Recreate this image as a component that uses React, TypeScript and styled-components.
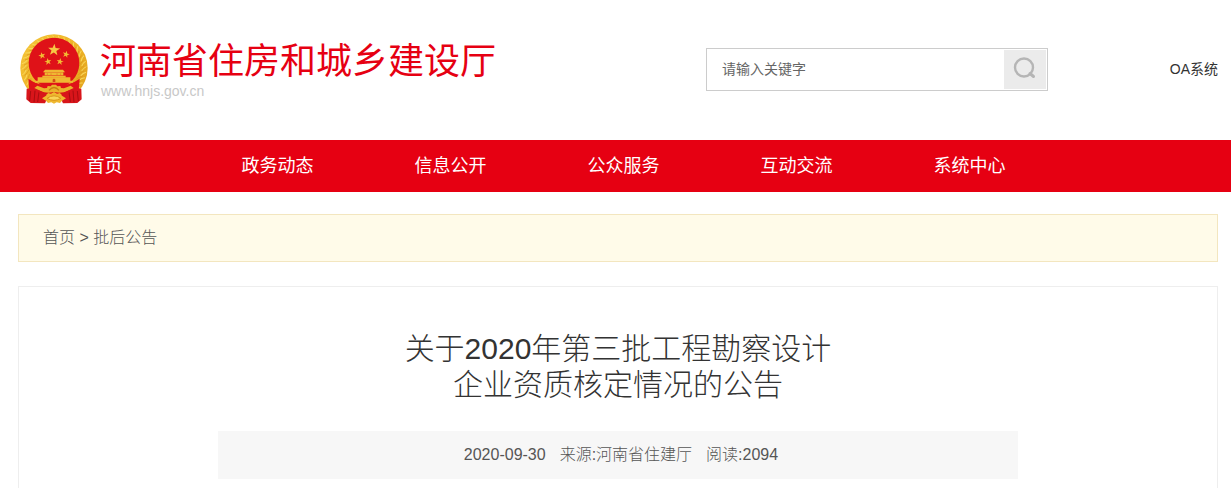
import React from "react";
import styled, { createGlobalStyle } from "styled-components";

const sans = `"Liberation Sans", "Noto Sans CJK SC", sans-serif`;

const GlobalStyle = createGlobalStyle`
  *, *::before, *::after { box-sizing: border-box; }
  body { margin: 0; background: #fff; color: #333; font-family: ${sans}; }
  a { color: inherit; text-decoration: none; }
`;

const Header = styled.header`
  display: flex;
  align-items: center;
  height: 140px;
  padding: 0 13px 2px 20px;
`;

const Brand = styled.a`
  display: flex;
  align-items: center;
  gap: 12px;
  flex: 1;
`;

const BrandText = styled.span`
  display: flex;
  flex-direction: column;
  color: #e60012;
`;

const BrandName = styled.span`
  font-size: 36px;
  line-height: 44px;
  white-space: nowrap;
`;

const BrandUrl = styled.span`
  padding: 0 1px;
  font-size: 14px;
  line-height: 14px;
  color: #c8c8c8;
`;

const SearchForm = styled.form`
  display: flex;
  width: 342px;
  height: 43px;
  padding: 1px;
  border: 1px solid #ccc;
`;

const SearchInput = styled.input`
  flex: 1;
  min-width: 0;
  padding: 0 14px;
  border: 0;
  outline: 0;
  background: transparent;
  font: 14px ${sans};
  color: #666;
  &::placeholder { color: #666; opacity: 1; }
`;

const SearchButton = styled.button`
  display: flex;
  align-items: center;
  justify-content: center;
  width: 42px;
  padding: 0 0 3px;
  border: 0;
  background: #ebebeb;
  cursor: pointer;
`;

const SystemLink = styled.a`
  width: 170px;
  font-size: 14px;
  line-height: 20px;
  text-align: right;
`;

const Nav = styled.nav`
  background: #e60012;
`;

const NavList = styled.ul`
  display: flex;
  margin: 0;
  padding: 0 13px 0 18px;
  list-style: none;
`;

const NavItem = styled.li`
  width: 173px;
  text-align: center;
  font-size: 18px;
  line-height: 52px;
  color: #fff;
`;

const NavLink = styled.a`
  display: block;
`;

const Main = styled.main`
  padding: 22px 13px 0 18px;
`;

const Breadcrumb = styled.nav`
  padding: 0 24px;
  border: 1px solid #f3e6bf;
  background: #fffbe9;
  font-size: 16px;
  line-height: 46px;
  font-weight: 300;
  color: #555;
`;

const Article = styled.article`
  display: flex;
  flex-direction: column;
  align-items: center;
  gap: 28px;
  margin-top: 24px;
  padding: 44px 20px 9px;
  border: 1px solid #eee;
  border-bottom: 0;
`;

const Title = styled.h1`
  margin: 0;
  font-size: 30px;
  line-height: 36px;
  font-weight: 300;
  text-align: center;
`;

const Meta = styled.p`
  display: flex;
  justify-content: center;
  gap: 14px;
  width: 69%;
  margin: 0;
  padding-left: 6px;
  background: #f7f7f7;
  font-size: 16px;
  line-height: 48px;
  font-weight: 300;
  color: #555;
`;

const star = (cx: number, cy: number, r: number, turn = 0) =>
  Array.from({ length: 10 }, (_, i) => {
    const a = ((i * 36 - 90 + turn) * Math.PI) / 180;
    const d = i % 2 ? r * 0.4 : r;
    return `${(cx + d * Math.cos(a)).toFixed(1)},${(cy + d * Math.sin(a)).toFixed(1)}`;
  }).join(" ");

const grains = Array.from({ length: 27 }, (_, i) => 140 + i * 10);

function Emblem() {
  return (
    <svg width="68" height="70" viewBox="29 24 204 210" aria-hidden="true">
      <defs>
        <linearGradient id="gold" x1="0" y1="0" x2="1" y2="1">
          <stop offset="0" stopColor="#f5c83c" />
          <stop offset="0.5" stopColor="#eeb326" />
          <stop offset="1" stopColor="#e0a01c" />
        </linearGradient>
      </defs>
      <circle cx="131" cy="126" r="101" fill="url(#gold)" />
      {grains.map((deg) => (
        <g key={deg} transform={`rotate(${deg} 131 126)`}>
          <path d="M221 119 q-10 7 -15 15" stroke="#d9951b" strokeWidth="2" fill="none" />
          <path d="M228 122 q-9 4 -14 13" stroke="#f9d65c" strokeWidth="3" fill="none" />
        </g>
      ))}
      <circle cx="131" cy="111" r="76" fill="#df1218" />
      <path d="M54 158 Q83 180 131 178 Q179 180 208 158 L205 195 L57 195Z" fill="#df1218" />
      <path d="M49 188 Q76 183 96 195 L114 211 L104 232 L61 231 L48 220Z" fill="#d8151a" />
      <path d="M213 188 Q186 183 166 195 L148 211 L158 232 L201 231 L214 220Z" fill="#d8151a" />
      <g stroke="#a90c10" strokeWidth="3" fill="none">
        <path d="M61 195 l-3 30 M74 194 l-3 35 M86 197 l-4 31" />
        <path d="M201 195 l3 30 M188 194 l3 35 M176 197 l4 31" />
      </g>
      <polygon points={star(131, 72, 19, 4)} fill="#f6c944" />
      <polygon points={star(95, 89, 11, -15)} fill="#f2bb33" />
      <polygon points={star(167, 85, 11, 15)} fill="#f2bb33" />
      <polygon points={star(113, 107, 11, -10)} fill="#f2bb33" />
      <polygon points={star(149, 107, 11, 10)} fill="#f2bb33" />
      <g fill="#efb832">
        <path d="M104 131 h54 l6 8 h-66z" />
        <path d="M103 139 h56 v9 h-56z" />
        <path d="M96 149 h70 v6 h-70z" />
        <path d="M82 154 h98 v13 h-98z" />
        <path d="M74 164 h114 v6 h-114z" />
      </g>
      <path d="M111 142 v5 M122 142 v5 M140 142 v5 M151 142 v5" stroke="#dc7a1c" strokeWidth="2" />
      <path d="M127 168 v-7 q4 -5 8 0 v7z" fill="#d34917" />
      <path
        d="M81 179 L101 187 L110 186 L112 180 L121 181 L125 176 L137 176 L141 181 L150 180 L152 186 L161 187 L181 179 L190 186 L163 199 L99 199 L72 186Z"
        fill="#eab12b"
      />
      <path d="M116 193 q15 -17 30 0" stroke="#c97f10" strokeWidth="4" fill="none" />
      <path d="M85 196 Q108 207 131 201 Q154 207 177 196" stroke="#d8151a" strokeWidth="6" fill="none" />
      <path
        d="M95 217 l12 -8 6 -8 9 2 9 -5 9 5 9 -2 6 8 12 8 -12 7 -6 7 -10 -2 -8 4 -8 -4 -10 2 -6 -7z"
        fill="#efb82f"
      />
      <path d="M110 217 q21 -15 42 0 q-21 12 -42 0z" stroke="#d9951b" strokeWidth="3" fill="#f8d458" />
    </svg>
  );
}

function SearchIcon() {
  return (
    <svg width="24" height="24" viewBox="0 0 24 24" fill="none" stroke="#b5b5b5" aria-hidden="true">
      <circle cx="11" cy="11.5" r="9" strokeWidth="2.4" />
      <path d="M17 17.5 L20.5 20.5" strokeWidth="3" strokeLinecap="round" />
    </svg>
  );
}

const navItems = ["首页", "政务动态", "信息公开", "公众服务", "互动交流", "系统中心"];

export default function App() {
  return (
    <>
      <GlobalStyle />
      <Header>
        <Brand href="#">
          <Emblem />
          <BrandText>
            <BrandName>河南省住房和城乡建设厅</BrandName>
            <BrandUrl>www.hnjs.gov.cn</BrandUrl>
          </BrandText>
        </Brand>
        <SearchForm role="search">
          <SearchInput type="text" placeholder="请输入关键字" aria-label="请输入关键字" />
          <SearchButton type="button" aria-label="搜索">
            <SearchIcon />
          </SearchButton>
        </SearchForm>
        <SystemLink href="#">OA系统</SystemLink>
      </Header>
      <Nav>
        <NavList>
          {navItems.map((item) => (
            <NavItem key={item}>
              <NavLink href="#">{item}</NavLink>
            </NavItem>
          ))}
        </NavList>
      </Nav>
      <Main>
        <Breadcrumb>
          <a href="#">首页</a> &gt; <a href="#">批后公告</a>
        </Breadcrumb>
        <Article>
          <Title>
            关于2020年第三批工程勘察设计
            <br />
            企业资质核定情况的公告
          </Title>
          <Meta>
            <time dateTime="2020-09-30">2020-09-30</time>
            <span>来源:河南省住建厅</span>
            <span>阅读:2094</span>
          </Meta>
        </Article>
      </Main>
    </>
  );
}
